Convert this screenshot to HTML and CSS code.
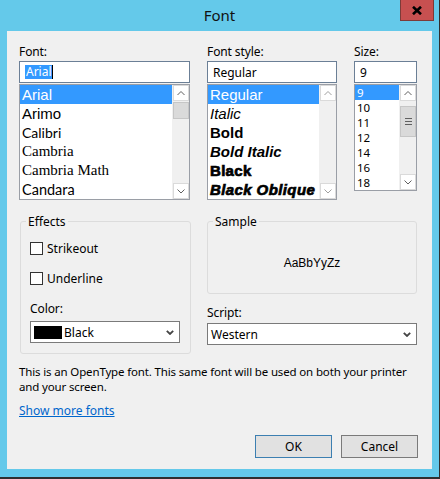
FILE: index.html
```html
<!DOCTYPE html>
<html>
<head>
<meta charset="utf-8">
<title>Font</title>
<link rel="stylesheet" href="styles.css">
</head>
<body>
<div class="window">
  <div class="titlebar">
    <span class="title">Font</span>
    <div class="close">
      <svg width="10" height="9" viewBox="0 0 10 9"><path d="M1 0.8 L9 8.2 M9 0.8 L1 8.2" stroke="#000" stroke-width="2.6" fill="none"/></svg>
    </div>
  </div>
  <div class="client">
    <div class="top">
      <div class="col">
        <div class="lbl">Font:</div>
        <div class="edit"><span class="sel">Arial</span><span class="caret"></span></div>
        <div class="list tall">
          <div class="items">
            <div class="item big selected f-arial">Arial</div>
            <div class="item big f-arimo">Arimo</div>
            <div class="item big f-calibri">Calibri</div>
            <div class="item big f-cambria">Cambria</div>
            <div class="item big f-cambria">Cambria Math</div>
            <div class="item big f-candara">Candara</div>
          </div>
          <div class="sb">
            <div class="sb-btn"><svg width="14" height="14" viewBox="0 0 14 14"><polyline points="3.5,9 7,5.5 10.5,9" fill="none" stroke="#606060" stroke-width="1"/></svg></div>
            <div class="thumb"></div>
            <div class="track"></div>
            <div class="sb-btn"><svg width="14" height="14" viewBox="0 0 14 14"><polyline points="3.5,5.5 7,9 10.5,5.5" fill="none" stroke="#606060" stroke-width="1"/></svg></div>
          </div>
        </div>
      </div>
      <div class="col">
        <div class="lbl">Font style:</div>
        <div class="edit"><span class="txt">Regular</span></div>
        <div class="list tall">
          <div class="items">
            <div class="item big selected s-regular">Regular</div>
            <div class="item big s-italic">Italic</div>
            <div class="item big s-bold">Bold</div>
            <div class="item big s-bolditalic">Bold Italic</div>
            <div class="item big s-black">Black</div>
            <div class="item big s-blackoblique">Black Oblique</div>
          </div>
          <div class="sb">
            <div class="sb-btn"><svg width="14" height="14" viewBox="0 0 14 14"><polyline points="3.5,9 7,5.5 10.5,9" fill="none" stroke="#a0a0a0" stroke-width="1"/></svg></div>
            <div class="track"></div>
            <div class="sb-btn"><svg width="14" height="14" viewBox="0 0 14 14"><polyline points="3.5,5.5 7,9 10.5,5.5" fill="none" stroke="#a0a0a0" stroke-width="1"/></svg></div>
          </div>
        </div>
      </div>
      <div class="col">
        <div class="lbl">Size:</div>
        <div class="edit"><span class="txt">9</span></div>
        <div class="list short">
          <div class="items">
            <div class="item small selected">9</div>
            <div class="item small">10</div>
            <div class="item small">11</div>
            <div class="item small">12</div>
            <div class="item small">14</div>
            <div class="item small">16</div>
            <div class="item small">18</div>
          </div>
          <div class="sb">
            <div class="sb-btn"><svg width="14" height="14" viewBox="0 0 14 14"><polyline points="3.5,9 7,5.5 10.5,9" fill="none" stroke="#606060" stroke-width="1"/></svg></div>
            <div class="gap"></div>
            <div class="thumb size-thumb"><span></span><span></span><span></span></div>
            <div class="track"></div>
            <div class="sb-btn"><svg width="14" height="14" viewBox="0 0 14 14"><polyline points="3.5,5.5 7,9 10.5,5.5" fill="none" stroke="#606060" stroke-width="1"/></svg></div>
          </div>
        </div>
      </div>
    </div>

    <div class="middle">
      <fieldset class="group effects">
        <legend>Effects</legend>
        <div class="effects-body">
          <div class="check first"><span class="box"></span><span>Strikeout</span></div>
          <div class="check"><span class="box"></span><span>Underline</span></div>
          <div class="lbl color-lbl">Color:</div>
          <div class="combo color-combo">
            <span class="swatch"></span><span class="ctext">Black</span>
            <svg class="chev" width="8" height="5" viewBox="0 0 8 5"><polyline points="0.8,0.8 4,4 7.2,0.8" fill="none" stroke="#444" stroke-width="1.8"/></svg>
          </div>
        </div>
      </fieldset>
      <div class="right">
        <fieldset class="group sample">
          <legend>Sample</legend>
          <div class="sample-text">AaBbYyZz</div>
        </fieldset>
        <div class="lbl script-lbl">Script:</div>
        <div class="combo">
          <span class="ctext">Western</span>
          <svg class="chev" width="8" height="5" viewBox="0 0 8 5"><polyline points="0.8,0.8 4,4 7.2,0.8" fill="none" stroke="#444" stroke-width="1.8"/></svg>
        </div>
      </div>
    </div>

    <p class="info">This is an OpenType font. This same font will be used on both your printer<br>and your screen.</p>
    <a class="link">Show more fonts</a>
    <div class="buttons">
      <div class="btn default">OK</div>
      <div class="btn">Cancel</div>
    </div>
  </div>
</div>
</body>
</html>
```

FILE: styles.css
```css
html, body {
  margin: 0;
  padding: 0;
  background: #64c9ea;
}

body {
  font-family: "Noto Sans", "Open Sans", sans-serif;
  font-size: 12px;
  color: #000;
}

.window {
  width: 439px;
  height: 477px;
  background: #64c9ea;
  border-right: 1px solid #2f2f2f;
  border-bottom: 2px solid #2f2f2f;
  display: flex;
  flex-direction: column;
}

.titlebar {
  height: 31px;
  display: grid;
  grid-template-columns: 1fr auto 1fr;
  align-items: start;
}

.title {
  grid-column: 2;
  font-size: 15px;
  line-height: 30px;
  color: #111;
}

.close {
  grid-column: 3;
  justify-self: end;
  margin-right: 5px;
  width: 32px;
  height: 20px;
  background: #c75050;
  border: 1px solid #7d3b38;
  border-top: none;
  display: flex;
  align-items: center;
  justify-content: center;
}

.client {
  margin-left: 7px;
  width: 425px;
  height: 438px;
  background: #f0f0f0;
  box-sizing: border-box;
  padding-top: 13px;
}

/* top row */
.top {
  display: grid;
  grid-template-columns: 171px 130px 63px;
  column-gap: 17px;
  padding-left: 12px;
}

.col {
  display: flex;
  flex-direction: column;
}

.lbl {
  line-height: 15px;
  height: 15px;
  letter-spacing: -0.1px;
}

.top .lbl {
  margin-bottom: 2px;
}

.edit {
  height: 22px;
  box-sizing: border-box;
  border: 1px solid #6b7f96;
  background: #fff;
  display: flex;
  align-items: center;
  padding-left: 5px;
  margin-bottom: 1px;
}

.edit .txt {
  line-height: 15px;
}

.sel {
  background: #3399ff;
  color: #fff;
  line-height: 14px;
  padding: 0 0 0 1px;
}

.caret {
  width: 1px;
  height: 14px;
  background: #000;
}

.list {
  box-sizing: border-box;
  border: 1px solid #9a9ea6;
  background: #fff;
  display: flex;
  overflow: hidden;
}

.list.tall { height: 116px; }
.list.short { height: 107px; }

.items {
  flex: 1;
  min-width: 0;
  overflow: hidden;
}

.item {
  white-space: nowrap;
  overflow: hidden;
  padding-left: 2px;
}

.item.big {
  height: 19px;
  line-height: 19px;
  font-size: 15px;
}

.item.small {
  height: 15px;
  line-height: 15px;
  font-size: 11.5px;
  padding-left: 2px;
}

.item.selected {
  background: #3399ff;
  color: #fff;
}

.f-arial, .f-arimo { font-family: "Liberation Sans", Arial, sans-serif; }
.f-calibri { font-family: "Lato", sans-serif; font-size: 14px !important; }
.f-cambria { font-family: "Liberation Serif", serif; }
.f-candara { font-family: "Lato", sans-serif; font-size: 14.5px !important; }

.s-regular, .s-italic, .s-bold, .s-bolditalic, .s-black, .s-blackoblique {
  font-family: "Liberation Sans", Arial, sans-serif;
}
.s-italic { font-style: italic; }
.s-bold { font-weight: bold; }
.s-bolditalic { font-weight: bold; font-style: italic; }
.s-black { font-weight: 900; -webkit-text-stroke: 0.7px #000; letter-spacing: 0.3px; }
.s-blackoblique { font-weight: 900; font-style: italic; -webkit-text-stroke: 0.7px #000; letter-spacing: 0.4px; }

/* scrollbar */
.sb {
  width: 16px;
  padding-left: 1px;
  background: #f0f0f0;
  display: flex;
  flex-direction: column;
  flex: none;
}

.sb-btn {
  width: 16px;
  height: 16px;
  box-sizing: border-box;
  border: 1px solid #dadada;
  background: #fff;
  display: flex;
  align-items: center;
  justify-content: center;
  flex: none;
}

.thumb {
  width: 16px;
  height: 17px;
  box-sizing: border-box;
  margin-top: 1px;
  background: #dadada;
  border: 1px solid #c6c6c6;
  flex: none;
}

.gap {
  height: 4px;
  flex: none;
}

.size-thumb {
  height: 31px;
  display: flex;
  flex-direction: column;
  align-items: center;
  justify-content: center;
  gap: 2px;
}

.size-thumb span {
  display: block;
  width: 7px;
  height: 1px;
  background: #606060;
}

.track {
  flex: 1;
}

/* middle */
.middle {
  display: grid;
  grid-template-columns: 171px 210px;
  column-gap: 16px;
  padding-left: 13px;
  margin-top: 14px;
  align-items: start;
}

.group {
  margin: 0;
  padding: 0;
  border: 1px solid #dcdcdc;
  border-radius: 3px;
  min-width: 0;
}

.group legend {
  margin-left: 5px;
  padding: 0 2px;
  line-height: 15px;
}

.effects-body {
  padding: 0 0 10px 9px;
}

.check {
  display: flex;
  align-items: center;
  height: 15px;
  gap: 4px;
  margin-top: 15px;
}

.check.first {
  margin-top: 12px;
}

.box {
  width: 13px;
  height: 13px;
  box-sizing: border-box;
  border: 1px solid #333;
  background: #fff;
  flex: none;
}

.color-lbl {
  margin-top: 15px;
  margin-bottom: 5px;
}

.combo {
  height: 22px;
  box-sizing: border-box;
  border: 1px solid #7a7a7a;
  background: #fff;
  display: flex;
  align-items: center;
  padding: 0 5px 0 3px;
}

.color-combo {
  width: 150px;
}

.swatch {
  width: 28px;
  height: 13px;
  background: #000;
  margin-right: 2px;
  flex: none;
}

.ctext {
  flex: 1;
  line-height: 15px;
}

.chev {
  flex: none;
}

.right {
  display: flex;
  flex-direction: column;
}

.sample {
  height: 80px;
  box-sizing: border-box;
}

.sample-text {
  text-align: center;
  font-family: "Liberation Sans", Arial, sans-serif;
  font-size: 12px;
  line-height: 15px;
  margin-top: 27px;
}

.script-lbl {
  margin-top: 11px;
  margin-bottom: 3px;
}

.info {
  margin: 10px 0 0 12px;
  line-height: 15px;
  font-size: 11.5px;
  letter-spacing: -0.15px;
}

.link {
  display: block;
  margin: 9px 0 0 12px;
  line-height: 15px;
  color: #0066cc;
  text-decoration: underline;
  width: max-content;
}

.buttons {
  display: flex;
  justify-content: flex-end;
  gap: 9px;
  padding-right: 14px;
  margin-top: 17px;
}

.btn {
  width: 77px;
  height: 23px;
  box-sizing: border-box;
  border: 1px solid #7a7a7a;
  background: #e1e1e1;
  display: flex;
  align-items: center;
  justify-content: center;
  line-height: 15px;
}

.btn.default {
  border-color: #3c7fb1;
}
```
